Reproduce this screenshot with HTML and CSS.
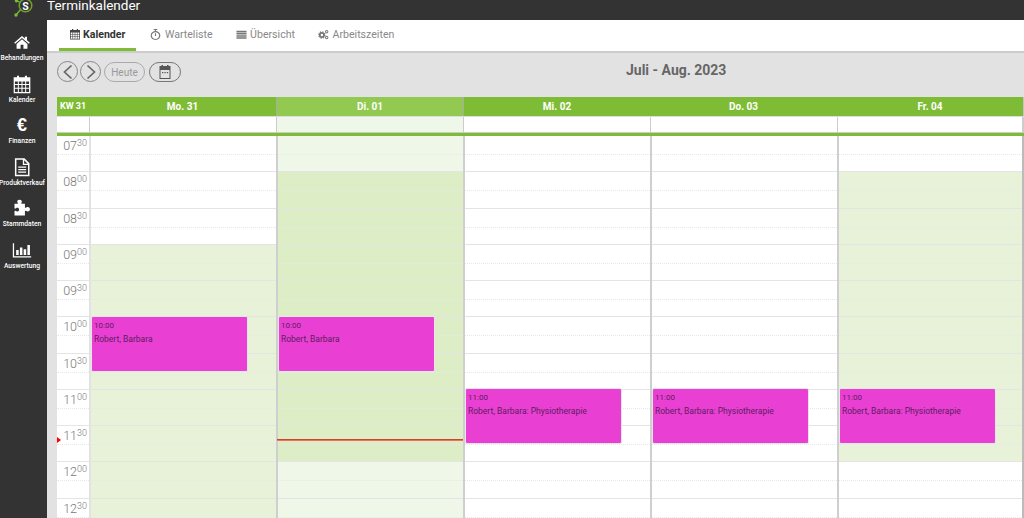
FILE: index.html
```html
<!DOCTYPE html>
<html lang="de">
<head>
    <meta charset="UTF-8">
    <title>Terminkalender</title>
    <link rel="stylesheet" href="styles.css">
</head>
<body>
<div class="app">
    <!-- Left navigation -->
    <nav class="sidebar">
        <div class="logo">
            <svg width="34" height="17" viewBox="0 0 34 17">
                <path d="M17 1 L24 4 M16 15 L21 9" stroke="#7fbc35" stroke-width="1.2" fill="none"/>
                <circle cx="25.5" cy="5.5" r="6.3" fill="#333" stroke="#6ea52f" stroke-width="1.5"/>
                <circle cx="16.5" cy="0.8" r="1.7" fill="#7fbc35"/>
                <circle cx="16" cy="15" r="1.7" fill="#7fbc35"/>
                <text x="25.5" y="9.5" class="logo-s">S</text>
            </svg>
        </div>
        <a class="nav-item">
            <svg class="nav-icon" viewBox="-2 -2 28 28"><path d="M12 3.5 L1 13 L2.4 14.6 L12 6.4 L21.6 14.6 L23 13 L19 9.6 V4.5 H16 V7 Z"/><path d="M12 8.3 L4.4 14.8 V21.5 H10 V16 H14 V21.5 H19.6 V14.8 Z"/></svg>
            <span>Behandlungen</span>
        </a>
        <a class="nav-item">
            <svg class="nav-icon" viewBox="0 0 24 24"><path fill-rule="evenodd" d="M2 4 H6 V2 H8.5 V4 H15.5 V2 H18 V4 H22 V23 H2 Z M3.5 9 V12 H7 V9 Z M8.2 9 V12 H11.4 V9 Z M12.6 9 V12 H15.8 V9 Z M17 9 V12 H20.5 V9 Z M3.5 13.2 V16.4 H7 V13.2 Z M8.2 13.2 V16.4 H11.4 V13.2 Z M12.6 13.2 V16.4 H15.8 V13.2 Z M17 13.2 V16.4 H20.5 V13.2 Z M3.5 17.6 V21.5 H7 V17.6 Z M8.2 17.6 V21.5 H11.4 V17.6 Z M12.6 17.6 V21.5 H15.8 V17.6 Z M17 17.6 V21.5 H20.5 V17.6 Z"/></svg>
            <span>Kalender</span>
        </a>
        <a class="nav-item">
            <span class="euro">€</span>
            <span>Finanzen</span>
        </a>
        <a class="nav-item">
            <svg class="nav-icon" viewBox="0 0 24 24"><path fill-rule="evenodd" d="M3.5 1.5 H15 L21 7.5 V23 H3.5 Z M5.3 3.3 V21.2 H19.2 V9.5 H13 V3.3 Z M14.6 3.8 V8 H18.8 Z M7.5 11.5 H17 V13 H7.5 Z M7.5 14.5 H17 V16 H7.5 Z M7.5 17.5 H17 V19 H7.5 Z"/></svg>
            <span>Produktverkauf</span>
        </a>
        <a class="nav-item">
            <svg class="nav-icon" viewBox="0 1 24 24"><path d="M9 3 C11.5 3 12.5 5 11.5 6.5 C11 7.3 11 8 12 8 H15.5 V12 C15.5 13 16.5 13 17.2 12.4 C18.8 11.2 21.5 12 21.5 14.5 C21.5 17 18.8 17.8 17.2 16.6 C16.5 16 15.5 16 15.5 17 V22 H3 V17 C3 16 4 16 4.7 16.6 C6.3 17.8 8.5 17 8.5 15 C8.5 13 6.3 12.2 4.7 13.4 C4 14 3 14 3 13 V8 H6.5 C7.3 8 7.2 7.2 6.7 6.5 C5.6 5 6.5 3 9 3 Z"/></svg>
            <span>Stammdaten</span>
        </a>
        <a class="nav-item">
            <svg class="nav-icon" viewBox="0 0 24 24"><path d="M1 4 H2.5 V19.5 H23 V21 H1 Z M5 12 H8 V18 H5 Z M9.5 9 H12.5 V18 H9.5 Z M14 11 H17 V18 H14 Z M18.5 6 H21.5 V18 H18.5 Z"/></svg>
            <span>Auswertung</span>
        </a>
    </nav>

    <div class="main">
        <header class="topbar"><h1>Terminkalender</h1></header>

        <div class="tabs">
            <a class="tab active">
                <svg class="tab-icon" viewBox="0 0 24 24"><path fill-rule="evenodd" d="M2 4 H6 V2 H8.5 V4 H15.5 V2 H18 V4 H22 V23 H2 Z M3.5 9 V12 H7 V9 Z M8.2 9 V12 H11.4 V9 Z M12.6 9 V12 H15.8 V9 Z M17 9 V12 H20.5 V9 Z M3.5 13.2 V16.4 H7 V13.2 Z M8.2 13.2 V16.4 H11.4 V13.2 Z M12.6 13.2 V16.4 H15.8 V13.2 Z M17 13.2 V16.4 H20.5 V13.2 Z M3.5 17.6 V21.5 H7 V17.6 Z M8.2 17.6 V21.5 H11.4 V17.6 Z M12.6 17.6 V21.5 H15.8 V17.6 Z M17 17.6 V21.5 H20.5 V17.6 Z"/></svg>
                Kalender
            </a>
            <a class="tab">
                <svg class="tab-icon" viewBox="0 0 24 24"><path fill-rule="evenodd" d="M8 0 H16 V2.4 H13.2 V4.6 C18.4 5.2 22.5 9.4 22.5 14.4 C22.5 19.8 17.8 24 12 24 C6.2 24 1.5 19.8 1.5 14.4 C1.5 9.4 5.6 5.2 10.8 4.6 V2.4 H8 Z M12 7 C7.6 7 4 10.3 4 14.4 C4 18.5 7.6 21.8 12 21.8 C16.4 21.8 20 18.5 20 14.4 C20 10.3 16.4 7 12 7 Z M10.8 9 H13.2 V15.5 H10.8 Z"/></svg>
                Warteliste
            </a>
            <a class="tab">
                <svg class="tab-icon" viewBox="0 0 24 24"><path d="M1 4 H23 V7.4 H1 Z M1 8.7 H23 V12.1 H1 Z M1 13.4 H23 V16.8 H1 Z M1 18 H23 V21.4 H1 Z"/></svg>
                Übersicht
            </a>
            <a class="tab">
                <svg class="tab-icon" viewBox="0 0 24 24"><circle cx="8.5" cy="13" r="4.6" fill="none" stroke="currentColor" stroke-width="4"/><circle cx="8.5" cy="13" r="7" fill="none" stroke="currentColor" stroke-width="2.4" stroke-dasharray="2.6 2.9"/><circle cx="19" cy="6" r="2.6" fill="none" stroke="currentColor" stroke-width="2.2"/><circle cx="19" cy="18.5" r="2.6" fill="none" stroke="currentColor" stroke-width="2.2"/></svg>
                Arbeitszeiten
            </a>
        </div>

        <div class="toolbar">
            <button class="round-btn">
                <svg width="12" height="16" viewBox="0 0 12 16"><path d="M9.5 1.5 L2.5 8 L9.5 14.5" fill="none" stroke="#666" stroke-width="1.7"/></svg>
            </button>
            <button class="round-btn">
                <svg width="12" height="16" viewBox="0 0 12 16"><path d="M2.5 1.5 L9.5 8 L2.5 14.5" fill="none" stroke="#666" stroke-width="1.7"/></svg>
            </button>
            <button class="pill-btn today">Heute</button>
            <button class="pill-btn picker">
                <svg width="12" height="14" viewBox="0 0 12 14"><path fill-rule="evenodd" fill="#555" d="M2.5 0 H4 V1 H8 V0 H9.5 V1 H11.5 V14 H0.5 V1 H2.5 Z M1.5 5 V13 H10.5 V5 Z"/><rect x="3" y="7" width="1.3" height="1.2" fill="#555"/><rect x="5.4" y="7" width="1.3" height="1.2" fill="#555"/><rect x="7.8" y="7" width="1.3" height="1.2" fill="#555"/></svg>
            </button>
            <div class="range">Juli - Aug. 2023</div>
        </div>

        <div class="calendar">
            <div class="week-row head">
                <div class="time-col">KW 31</div>
                <div class="day-col">Mo. 31</div>
                <div class="day-col today-col">Di. 01</div>
                <div class="day-col">Mi. 02</div>
                <div class="day-col">Do. 03</div>
                <div class="day-col">Fr. 04</div>
            </div>
            <div class="week-row allday">
                <div class="time-col"></div>
                <div class="day-col"></div>
                <div class="day-col today-col"></div>
                <div class="day-col"></div>
                <div class="day-col"></div>
                <div class="day-col"></div>
            </div>

            <div class="week-row grid">
                <div class="time-col">
                    <div class="now-mark"></div>
                    <div class="slot">07<sup>30</sup></div>
                    <div class="slot">08<sup>00</sup></div>
                    <div class="slot">08<sup>30</sup></div>
                    <div class="slot">09<sup>00</sup></div>
                    <div class="slot">09<sup>30</sup></div>
                    <div class="slot">10<sup>00</sup></div>
                    <div class="slot">10<sup>30</sup></div>
                    <div class="slot">11<sup>00</sup></div>
                    <div class="slot">11<sup>30</sup></div>
                    <div class="slot">12<sup>00</sup></div>
                    <div class="slot">12<sup>30</sup></div>
                </div>

                <div class="day-col">
                    <div class="slot"></div><div class="slot"></div><div class="slot"></div>
                    <div class="slot open"></div><div class="slot open"></div><div class="slot open"></div>
                    <div class="slot open"></div><div class="slot open"></div><div class="slot open"></div>
                    <div class="slot open"></div><div class="slot open"></div>
                    <div class="event at-10"><small>10:00</small><p>Robert, Barbara</p></div>
                </div>

                <div class="day-col today-col">
                    <div class="slot"></div><div class="slot open"></div><div class="slot open"></div>
                    <div class="slot open"></div><div class="slot open"></div><div class="slot open"></div>
                    <div class="slot open"></div><div class="slot open"></div><div class="slot open"></div>
                    <div class="slot"></div><div class="slot"></div>
                    <div class="event at-10"><small>10:00</small><p>Robert, Barbara</p></div>
                    <div class="now-line"></div>
                </div>

                <div class="day-col">
                    <div class="slot"></div><div class="slot"></div><div class="slot"></div>
                    <div class="slot"></div><div class="slot"></div><div class="slot"></div>
                    <div class="slot"></div><div class="slot"></div><div class="slot"></div>
                    <div class="slot"></div><div class="slot"></div>
                    <div class="event at-11"><small>11:00</small><p>Robert, Barbara: Physiotherapie</p></div>
                </div>

                <div class="day-col">
                    <div class="slot"></div><div class="slot"></div><div class="slot"></div>
                    <div class="slot"></div><div class="slot"></div><div class="slot"></div>
                    <div class="slot"></div><div class="slot"></div><div class="slot"></div>
                    <div class="slot"></div><div class="slot"></div>
                    <div class="event at-11"><small>11:00</small><p>Robert, Barbara: Physiotherapie</p></div>
                </div>

                <div class="day-col">
                    <div class="slot"></div><div class="slot open"></div><div class="slot open"></div>
                    <div class="slot open"></div><div class="slot open"></div><div class="slot open"></div>
                    <div class="slot open"></div><div class="slot open"></div><div class="slot open"></div>
                    <div class="slot"></div><div class="slot"></div>
                    <div class="event at-11"><small>11:00</small><p>Robert, Barbara: Physiotherapie</p></div>
                </div>
            </div>
        </div>
    </div>
</div>
</body>
</html>
```

FILE: styles.css
```css
html, body {
    margin: 0;
    height: 100%;
    overflow: hidden;
}

body {
    font-family: 'Roboto', sans-serif;
    background-color: #e2e2e2;
    color: #333;
}

.app {
    display: flex;
    height: 518px;
}

/* Left navigation */
.sidebar {
    width: 47px;
    flex-shrink: 0;
    padding-right: 3px;
    box-sizing: border-box;
    background-color: #333;
    color: #fff;
}

.logo {
    height: 31px;
}

.logo svg {
    display: block;
}

.logo-s {
    font: 700 10.5px 'Roboto', sans-serif;
    fill: #fff;
    text-anchor: middle;
}

.nav-item {
    display: flex;
    flex-direction: column;
    align-items: center;
    height: 41.6px;
    font-size: 6.7px;
    font-weight: 500;
    white-space: nowrap;
}

.nav-icon {
    width: 20px;
    height: 20px;
    margin-top: 1px;
    margin-bottom: 2px;
    fill: #fff;
}

.euro {
    height: 20px;
    margin-top: 1px;
    margin-bottom: 2px;
    font: 700 18px/20px 'Liberation Sans', sans-serif;
}

.nav-item span:last-child {
    line-height: 9px;
}

.main {
    flex: 1;
    min-width: 0;
}

.topbar {
    height: 20px;
    background-color: #333;
}

.topbar h1 {
    margin: 0;
    font-size: 13.5px;
    font-weight: 400;
    line-height: 10px;
    color: #fff;
}

/* Tabs */
.tabs {
    display: flex;
    height: 31px;
    padding-left: 12px;
    background-color: #fff;
    border-bottom: 2px solid #ccc;
}

.tab {
    display: flex;
    align-items: center;
    gap: 3.5px;
    height: 28px;
    padding: 0 10.5px;
    margin-right: 2px;
    font-size: 10.6px;
    color: #888;
}

.tab.active {
    gap: 2.5px;
    padding-left: 9.5px;
    margin-right: 4px;
    color: #333;
    font-weight: 700;
    border-bottom: 3px solid #7fbc35;
}

.tab-icon {
    width: 11px;
    height: 11px;
    fill: currentColor;
    color: #777;
}

.tab.active .tab-icon {
    width: 12px;
    height: 12px;
    color: #444;
}

/* Toolbar above the calendar */
.toolbar {
    display: flex;
    align-items: flex-start;
    height: 36px;
    padding: 8px 0 0 10px;
}

.round-btn {
    display: flex;
    align-items: center;
    justify-content: center;
    width: 21px;
    height: 21px;
    margin-right: 2px;
    padding: 0;
    border: 1px solid #888;
    border-radius: 50%;
    background: none;
}

.pill-btn {
    display: flex;
    align-items: center;
    justify-content: center;
    height: 20px;
    margin-top: 1px;
    padding: 0;
    border-radius: 10px;
    background: none;
    font-family: inherit;
}

.today {
    width: 41px;
    margin-left: 1px;
    border: 1px solid #aaa;
    font-size: 10px;
    color: #999;
}

.picker {
    width: 32px;
    margin-left: 4px;
    border: 1px solid #777;
}

.range {
    margin-left: 445px;
    font-size: 14px;
    font-weight: 700;
    line-height: 18px;
    color: #666;
    white-space: nowrap;
}

/* Calendar */
.calendar {
    margin-left: 10px;
}

.week-row {
    display: flex;
}

.time-col {
    position: relative;
    width: 32px;
    flex-shrink: 0;
    box-sizing: border-box;
}

.day-col {
    position: relative;
    width: 187px;
    flex-shrink: 0;
    box-sizing: border-box;
}

.head {
    height: 20px;
    background-color: #7fbc35;
    color: #fff;
    font-size: 10px;
    font-weight: 700;
    line-height: 19px;
    text-align: center;
    border-bottom: 1px solid #ddd;
    box-sizing: border-box;
}

.head .time-col {
    font-size: 9px;
}

.head .today-col {
    background-color: #92c950;
    border-left: 1px solid #aaa;
}

.head .today-col + .day-col {
    border-left: 1px solid #aaa;
}

.head .day-col:last-child {
    border-right: 1px solid #c4c4c4;
}

.allday {
    height: 15px;
    background-color: #fff;
    border-bottom: 1px solid #ccc;
}

.allday .day-col {
    border-left: 1px solid #ccc;
}

.allday .day-col:last-child {
    border-right: 2px solid #ccc;
}

.allday .today-col {
    background-color: #eff7e8;
}

.grid {
    border-top: 3px solid #7fbc35;
    background-color: #fff;
}

.grid .time-col {
    color: #777;
    font-size: 12.5px;
    font-weight: 300;
}

.grid .day-col {
    border-left: 2px solid #cfcfcf;
}

.grid .time-col + .day-col {
    border-left-color: #e2e2e2;
}

.grid .day-col:last-child {
    border-right: 2px solid #bbb;
}

.slot {
    position: relative;
    height: 36.25px;
    box-sizing: border-box;
    border-bottom: 1px solid #e4e4e4;
}

.slot::after {
    content: "";
    position: absolute;
    left: 0;
    right: 0;
    top: 18px;
    border-top: 1px dotted #e8e8e8;
}

.time-col .slot {
    padding: 2px 2px 0 0;
    text-align: right;
    line-height: 16px;
}

.slot sup {
    font-size: 9px;
    line-height: 0;
    vertical-align: 4.5px;
}

.slot.open {
    background-color: #e7f2d8;
}

.today-col .slot {
    background-color: #eff7e8;
}

.today-col .slot.open {
    background-color: #ddedc6;
}

/* Appointments */
.event {
    position: absolute;
    left: 0;
    width: 157px;
    height: 56px;
    padding: 3.5px 2px;
    box-sizing: border-box;
    background-color: #ea3fd3;
    border: 1px solid #e6e6e6;
    border-radius: 2px;
    color: #5a2060;
    font-size: 8.5px;
    line-height: 10px;
}

.event small {
    display: block;
    font-size: 8px;
}

.event p {
    margin: 3px 0 0;
}

.at-10 {
    top: 180px;
}

.at-11 {
    top: 252px;
}

/* Current time */
.now-line {
    position: absolute;
    left: -1px;
    right: 0;
    top: 303px;
    height: 2px;
    background-color: #e8735f;
    border-top: 1px solid #d8402c;
    box-sizing: border-box;
}

.now-mark {
    position: absolute;
    left: 0;
    top: 301px;
    border-left: 4px solid #f00;
    border-top: 3px solid transparent;
    border-bottom: 3px solid transparent;
}
```
